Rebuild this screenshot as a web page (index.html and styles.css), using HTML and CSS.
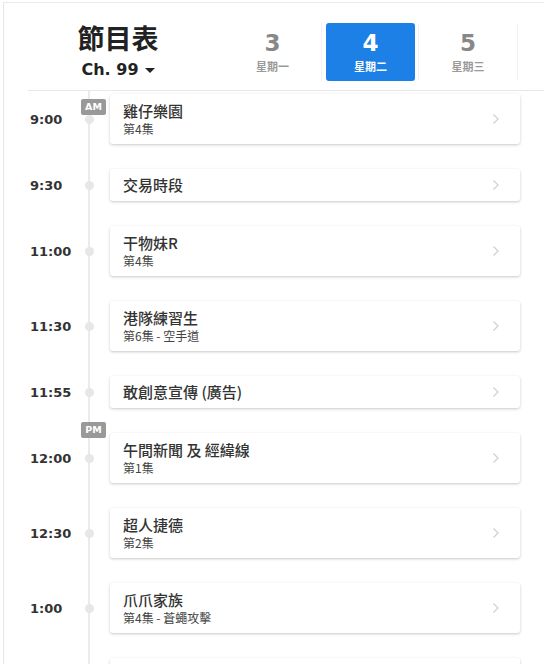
FILE: index.html
```html
<!DOCTYPE html>
<html lang="zh-Hant">
<head>
<meta charset="utf-8">
<link rel="stylesheet" href="styles.css">
</head>
<body>
<div class="page">
  <header class="header">
    <div class="title-block">
      <h1 class="title">節目表</h1>
      <div class="channel">Ch. 99 <span class="caret"></span></div>
    </div>
    <nav class="tabs">
      <div class="tab"><span class="tab-num">3</span><span class="tab-day">星期一</span></div>
      <div class="tab active"><div class="tab-inner"><span class="tab-num">4</span><span class="tab-day">星期二</span></div></div>
      <div class="tab"><span class="tab-num">5</span><span class="tab-day">星期三</span></div>
    </nav>
  </header>
  <main class="list">
    <div class="row">
      <span class="badge badge-am">AM</span>
      <div class="time">9:00</div><div class="marker"><span class="dot"></span></div>
      <div class="card"><div class="card-text"><div class="card-title">雞仔樂園</div><div class="card-sub">第4集</div></div><svg class="chev" viewBox="0 0 8 12"><polyline points="1.5,1.5 6,6 1.5,10.5"/></svg></div>
    </div>
    <div class="row">
      <div class="time">9:30</div><div class="marker"><span class="dot"></span></div>
      <div class="card single"><div class="card-text"><div class="card-title">交易時段</div></div><svg class="chev" viewBox="0 0 8 12"><polyline points="1.5,1.5 6,6 1.5,10.5"/></svg></div>
    </div>
    <div class="row">
      <div class="time">11:00</div><div class="marker"><span class="dot"></span></div>
      <div class="card"><div class="card-text"><div class="card-title">干物妹R</div><div class="card-sub">第4集</div></div><svg class="chev" viewBox="0 0 8 12"><polyline points="1.5,1.5 6,6 1.5,10.5"/></svg></div>
    </div>
    <div class="row">
      <div class="time">11:30</div><div class="marker"><span class="dot"></span></div>
      <div class="card"><div class="card-text"><div class="card-title">港隊練習生</div><div class="card-sub">第6集 - 空手道</div></div><svg class="chev" viewBox="0 0 8 12"><polyline points="1.5,1.5 6,6 1.5,10.5"/></svg></div>
    </div>
    <div class="row">
      <div class="time">11:55</div><div class="marker"><span class="dot"></span></div>
      <div class="card single"><div class="card-text"><div class="card-title">敢創意宣傳 (廣告)</div></div><svg class="chev" viewBox="0 0 8 12"><polyline points="1.5,1.5 6,6 1.5,10.5"/></svg></div>
    </div>
    <div class="row">
      <span class="badge badge-pm">PM</span>
      <div class="time">12:00</div><div class="marker"><span class="dot"></span></div>
      <div class="card"><div class="card-text"><div class="card-title">午間新聞 及 經緯線</div><div class="card-sub">第1集</div></div><svg class="chev" viewBox="0 0 8 12"><polyline points="1.5,1.5 6,6 1.5,10.5"/></svg></div>
    </div>
    <div class="row">
      <div class="time">12:30</div><div class="marker"><span class="dot"></span></div>
      <div class="card"><div class="card-text"><div class="card-title">超人捷德</div><div class="card-sub">第2集</div></div><svg class="chev" viewBox="0 0 8 12"><polyline points="1.5,1.5 6,6 1.5,10.5"/></svg></div>
    </div>
    <div class="row">
      <div class="time">1:00</div><div class="marker"><span class="dot"></span></div>
      <div class="card"><div class="card-text"><div class="card-title">爪爪家族</div><div class="card-sub">第4集 - 蒼蠅攻擊</div></div><svg class="chev" viewBox="0 0 8 12"><polyline points="1.5,1.5 6,6 1.5,10.5"/></svg></div>
    </div>
    <div class="row">
      <div class="time"></div><div class="marker"><span class="dot"></span></div>
      <div class="card"><div class="card-text"><div class="card-title">&nbsp;</div><div class="card-sub">&nbsp;</div></div></div>
    </div>
  </main>
</div>
</body>
</html>
```
FILE: styles.css
```css
html, body {
  margin: 0;
  padding: 0;
  background: #fff;
}
body {
  font-family: "Noto Sans CJK TC", "Noto Sans", sans-serif;
  color: #333;
  overflow: hidden;
  height: 664px;
}
.page {
  margin: 2px 0 0 3px;
  border-top: 1px solid #e9e9e9;
  border-left: 1px solid #e6e6e6;
  height: 700px;
}
.header {
  display: flex;
  align-items: flex-start;
  margin-left: 24px;
  height: 87px;
  border-bottom: 1px solid #e8e8e8;
}
.title-block {
  width: 180px;
  display: flex;
  flex-direction: column;
  align-items: center;
  padding-top: 17px;
}
.title {
  margin: 0;
  font-family: "Noto Sans CJK TC", sans-serif;
  font-size: 27px;
  font-weight: 700;
  line-height: 36px;
  color: #222;
}
.channel {
  margin-top: 4px;
  font-family: "DejaVu Sans", sans-serif;
  font-weight: 700;
  font-size: 16px;
  line-height: 20px;
  color: #222;
  display: flex;
  align-items: center;
  gap: 6px;
}
.caret {
  width: 0;
  height: 0;
  border-left: 5px solid transparent;
  border-right: 5px solid transparent;
  border-top: 5px solid #222;
  margin-top: 1px;
}
.tabs {
  display: flex;
  margin-left: 16px;
  margin-top: 20px;
  height: 58px;
}
.tab {
  width: 97px;
  border-right: 1px solid #f1f1f1;
  display: flex;
  flex-direction: column;
  align-items: center;
  justify-content: center;
  color: #8a8a8a;
}
.tab:last-child { width: 98px; }
.tab.active {
  padding: 0 3px 0 4px;
  box-sizing: border-box;
  align-items: stretch;
}
.tab-inner {
  flex: 1;
  background: #1c80e6;
  border-radius: 3px;
  display: flex;
  flex-direction: column;
  align-items: center;
  justify-content: center;
  color: #fff;
}
.tab-num {
  font-family: "DejaVu Sans", sans-serif;
  font-weight: 700;
  font-size: 23px;
  line-height: 24px;
}
.tab-day {
  margin-top: 4px;
  font-family: "Noto Sans CJK TC", sans-serif;
  font-weight: 700;
  font-size: 11px;
  line-height: 14px;
  color: #9a9a9a;
}
.tab-inner .tab-day { color: #fff; }
.tab:not(.active) .tab-num { color: #888; }

.list {
  display: flex;
  flex-direction: column;
  gap: 25px;
  padding: 3px 24px 0 26px;
  background: linear-gradient(#ebebeb, #ebebeb) no-repeat 84px 0 / 2px 100%;
}
.row {
  position: relative;
  display: grid;
  grid-template-columns: 51px 16px 1fr;
  align-items: center;
}
.time {
  font-family: "DejaVu Sans", sans-serif;
  font-weight: 700;
  font-size: 13px;
  color: #333;
}
.marker {
  display: flex;
  justify-content: center;
}
.dot {
  width: 9px;
  height: 9px;
  border-radius: 50%;
  background: #e7e7e7;
}
.card {
  margin-left: 13px;
  background: #fff;
  border-radius: 3px;
  box-shadow: 0 1px 3px rgba(0, 0, 0, 0.22);
  display: flex;
  align-items: center;
  justify-content: space-between;
  padding: 7px 20px 7px 13px;
}
.card.single {
  padding-top: 6px;
  padding-bottom: 6px;
}
.card-title {
  font-size: 15px;
  line-height: 20px;
  font-weight: 500;
  color: #333;
}
.card-sub {
  font-size: 12px;
  line-height: 16px;
  color: #444;
}
.chev {
  width: 8px;
  height: 12px;
  fill: none;
  stroke: #d2d2d2;
  stroke-width: 1.3;
}
.badge {
  position: absolute;
  left: 51px;
  width: 25px;
  height: 16px;
  background: #999;
  border-radius: 2px;
  color: #fff;
  font-family: "DejaVu Sans", sans-serif;
  font-weight: 700;
  font-size: 9.5px;
  line-height: 16px;
  text-align: center;
  z-index: 1;
}
.badge-am { top: 5px; }
.badge-pm { top: -11px; }
```
